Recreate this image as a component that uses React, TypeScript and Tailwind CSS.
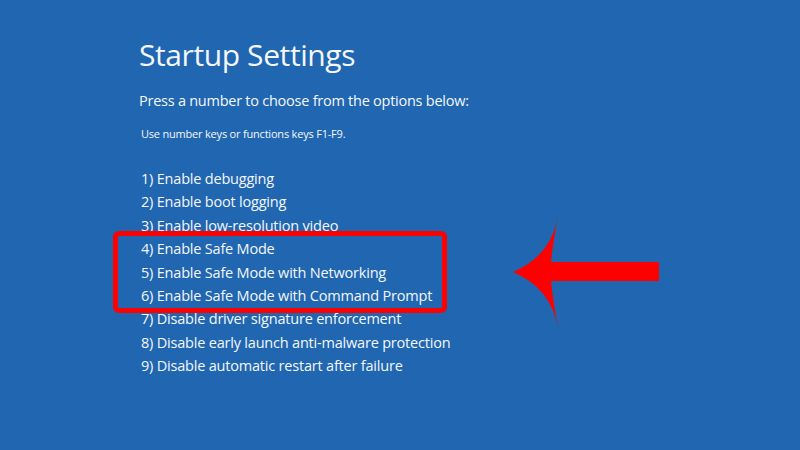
export default function App() {
  const font = { fontFamily: '"Open Sans", "Noto Sans", sans-serif' }
  return (
    <div className="h-[450px] w-[800px] overflow-hidden bg-[#2066b1] text-[#f4f7fb]" style={font}>
      <div className="flex flex-col pl-[139px] pt-[35px]">
        <h1 className="text-[30px] font-normal leading-[40px] tracking-[-0.4px]">Startup Settings</h1>
        <p className="mt-[16px] text-[14.5px] leading-[20px] tracking-[-0.25px]">
          Press a number to choose from the options below:
        </p>
        <p className="mt-[15px] pl-[2px] text-[11px] leading-[16px] tracking-[-0.2px]">
          Use number keys or functions keys F1-F9.
        </p>
        <div className="mt-[25px] flex flex-col pl-[2px] text-[14.5px] leading-[23.4px] tracking-[-0.2px]">
          <div>1) Enable debugging</div>
          <div>2) Enable boot logging</div>
          <div>3) Enable low-resolution video</div>
          <div className="flex items-center">
            <div className="-my-[6px] -ml-[28px] rounded-[6px] border-[5px] border-[#ff0000] py-[1px] pl-[23px] pr-[10px]">
              <div>4) Enable Safe Mode</div>
              <div>5) Enable Safe Mode with Networking</div>
              <div>6) Enable Safe Mode with Command Prompt</div>
            </div>
            <svg className="-my-[21px] ml-[66px]" width="146" height="112" viewBox="0 0 146 112">
              <path
                d="M45 0 Q38 40 0 56 Q38 72 45 112 Q40 85 38 65 L146 65 L146 46 L38 46 Q40 27 45 0 Z"
                fill="#ff0000"
              />
            </svg>
          </div>
          <div>7) Disable driver signature enforcement</div>
          <div>8) Disable early launch anti-malware protection</div>
          <div>9) Disable automatic restart after failure</div>
        </div>
      </div>
    </div>
  )
}
